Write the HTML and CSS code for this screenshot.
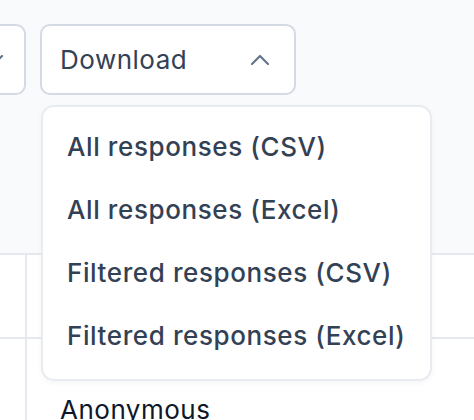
FILE: index.html
```html
<!DOCTYPE html>
<html lang="en">
<head>
    <meta charset="UTF-8">
    <meta name="viewport" content="width=device-width, initial-scale=1.0">
    <title>Responses</title>
    <link rel="stylesheet" href="styles.css">
</head>
<body>
    <div class="toolbar">
        <div class="toolbar-row">
            <button class="select-button filter-button" aria-label="Filter">
                <svg class="chevron" width="18" height="12" viewBox="0 0 18 12"><path d="M2 2 L9 9 L16 2" fill="none" stroke="#64748b" stroke-width="2.2" stroke-linecap="round" stroke-linejoin="round"/></svg>
            </button>
            <div class="download">
                <button class="select-button download-button">
                    <span>Download</span>
                    <svg class="chevron" width="20" height="13" viewBox="0 0 20 13"><path d="M2 11 L10 3 L18 11" fill="none" stroke="#64748b" stroke-width="2.2" stroke-linecap="round" stroke-linejoin="round"/></svg>
                </button>
                <ul class="menu">
                    <li class="menu-item">All responses (CSV)</li>
                    <li class="menu-item">All responses (Excel)</li>
                    <li class="menu-item">Filtered responses (CSV)</li>
                    <li class="menu-item">Filtered responses (Excel)</li>
                </ul>
            </div>
        </div>
    </div>

    <div class="table">
        <div class="row">
            <div class="cell cell-check"></div>
            <div class="cell"></div>
        </div>
        <div class="row">
            <div class="cell cell-check"></div>
            <div class="cell cell-name">Anonymous</div>
        </div>
    </div>
</body>
</html>
```

FILE: styles.css
```css
body {
    margin: 0;
    padding: 0;
    font-family: Inter, "Noto Sans", sans-serif;
    background: #ffffff;
    overflow: hidden;
}
.toolbar {
    background: #f8fafc;
    height: 255px;
    border-bottom: 2px solid #e5e9ef;
    padding-top: 24px;
    box-sizing: border-box;
}
.toolbar-row {
    display: flex;
    gap: 14px;
    margin-left: -134px;
}
.select-button {
    display: flex;
    align-items: center;
    justify-content: space-between;
    height: 71px;
    padding: 0 24px 0 18px;
    background: #ffffff;
    border: 2px solid #d3dae3;
    border-radius: 10px;
    font-family: inherit;
    font-size: 26px;
    letter-spacing: 0.5px;
    color: #334155;
    box-sizing: border-box;
}
.filter-button {
    width: 160px;
    justify-content: flex-end;
    padding-right: 20px;
}
.download {
    position: relative;
}
.download-button {
    width: 256px;
}
.menu {
    position: absolute;
    top: 81px;
    left: 1px;
    width: 391px;
    margin: 0;
    padding: 8px 0 12px;
    list-style: none;
    background: #ffffff;
    border: 2px solid #e8ecf1;
    border-radius: 13px;
    box-shadow: 0 2px 6px rgba(15, 23, 42, 0.04);
    box-sizing: border-box;
}
.menu-item {
    height: 63px;
    line-height: 63px;
    padding-left: 24px;
    font-size: 26px;
    font-weight: 500;
    letter-spacing: 0.6px;
    color: #334155;
}
.row {
    display: flex;
    height: 82px;
    border-bottom: 2px solid #e5e9ef;
}
.cell-check {
    width: 25px;
    border-right: 2px solid #e5e9ef;
}
.cell-name {
    padding: 58px 0 0 33px;
    font-size: 26px;
    letter-spacing: 0.5px;
    color: #0f172a;
    line-height: 1;
}
```
